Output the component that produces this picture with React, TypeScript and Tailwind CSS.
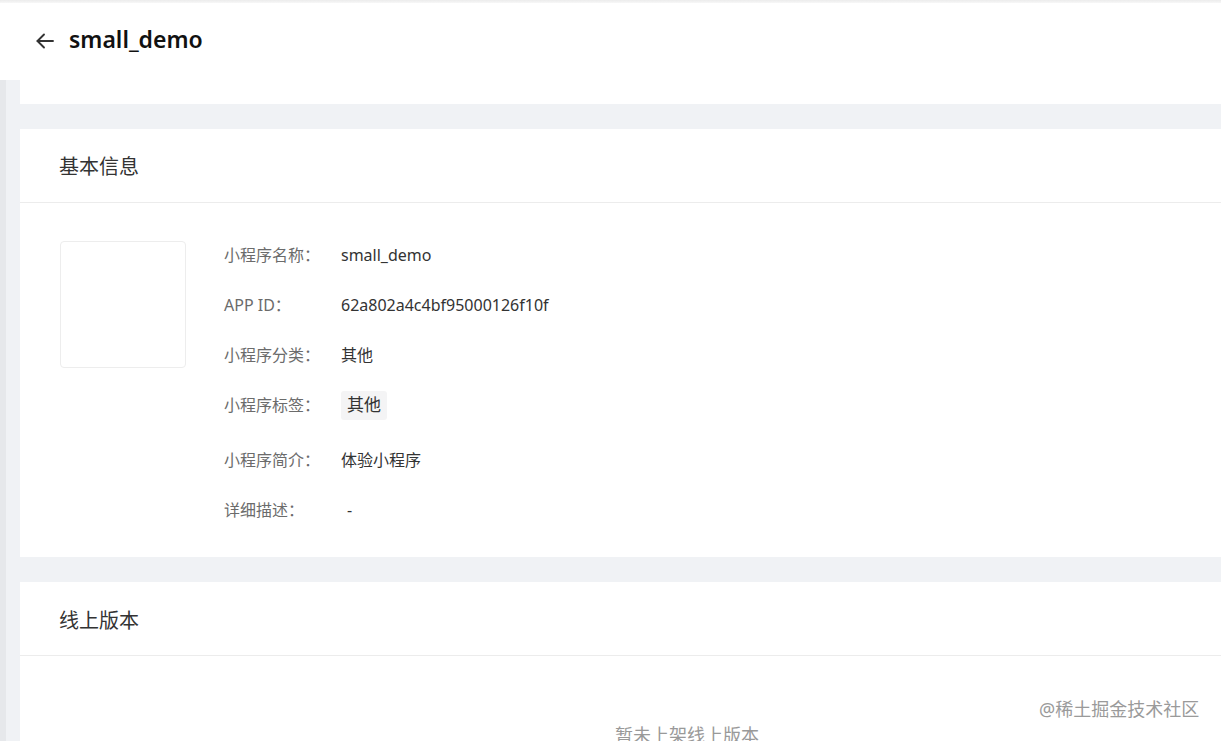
import React from "react";

const font = { fontFamily: '"Noto Sans", "Noto Sans CJK SC", sans-serif' };

function Row({ label, children, extra = "" }: { label: string; children: React.ReactNode; extra?: string }) {
  return (
    <div className={`flex h-[50px] items-center ${extra}`}>
      <div className="w-[117px] text-[16px] text-[#6b6b6b]">{label}</div>
      <div className="text-[16px] text-[#333]">{children}</div>
    </div>
  );
}

export default function App() {
  return (
    <div className="relative h-[741px] w-[1221px] overflow-hidden bg-[#f0f2f5]" style={font}>
      <div className="h-[3px] bg-gradient-to-b from-[#ececec] to-[#f7f7f7]" />
      <div className="flex h-[77px] items-center bg-white pl-[35px]">
        <svg width="20" height="20" viewBox="0 0 20 20" fill="none" stroke="#333" strokeWidth="1.9" strokeLinecap="round" strokeLinejoin="round" className="mt-[-2px]">
          <path d="M18 10H2.5" />
          <path d="M9 3.5L2.5 10L9 16.5" />
        </svg>
        <div className="ml-[14px] mt-[-4px] text-[23px] font-semibold leading-none text-[#111]">small_demo</div>
      </div>
      <div className="flex">
        <div className="w-[6px] shrink-0 bg-[#e6e8eb]" />
        <div className="flex-1 pl-[14px]">
          <div className="h-[24px] bg-white" />
          <div className="h-[25px]" />
          <div className="bg-white">
            <div className="flex h-[74px] items-center border-b border-[#ececec] pl-[39px] pt-[3px] text-[20px] text-[#333]">基本信息</div>
            <div className="flex pl-[40px] pt-[27px] pb-[22px]">
              <div className="mt-[11px] h-[127px] w-[126px] rounded-[4px] border border-[#ededed] bg-white" />
              <div className="ml-[38px] flex flex-col">
                <Row label="小程序名称：">small_demo</Row>
                <Row label="APP ID：">62a802a4c4bf95000126f10f</Row>
                <Row label="小程序分类：">其他</Row>
                <Row label="小程序标签：" extra="mb-[5px]">
                  <span className="inline-flex h-[29px] items-center rounded-[3px] bg-[#f4f4f5] px-[6px] text-[17px]">其他</span>
                </Row>
                <Row label="小程序简介：">体验小程序</Row>
                <Row label="详细描述："><span className="pl-[6px]">-</span></Row>
              </div>
            </div>
          </div>
          <div className="h-[25px]" />
          <div className="h-[200px] bg-white">
            <div className="flex h-[74px] items-center border-b border-[#ececec] pl-[39px] pt-[4px] text-[20px] text-[#333]">线上版本</div>
            <div className="pl-[595px] pt-[66px] text-[18px] text-[#999]">暂未上架线上版本</div>
          </div>
        </div>
      </div>
      <div
        className="absolute left-[1039px] top-[696px] text-[18px] text-[#9a9a9a]"
        style={{ textShadow: "0 0 2px #fff, 0 0 2px #fff" }}
      >
        @稀土掘金技术社区
      </div>
    </div>
  );
}
